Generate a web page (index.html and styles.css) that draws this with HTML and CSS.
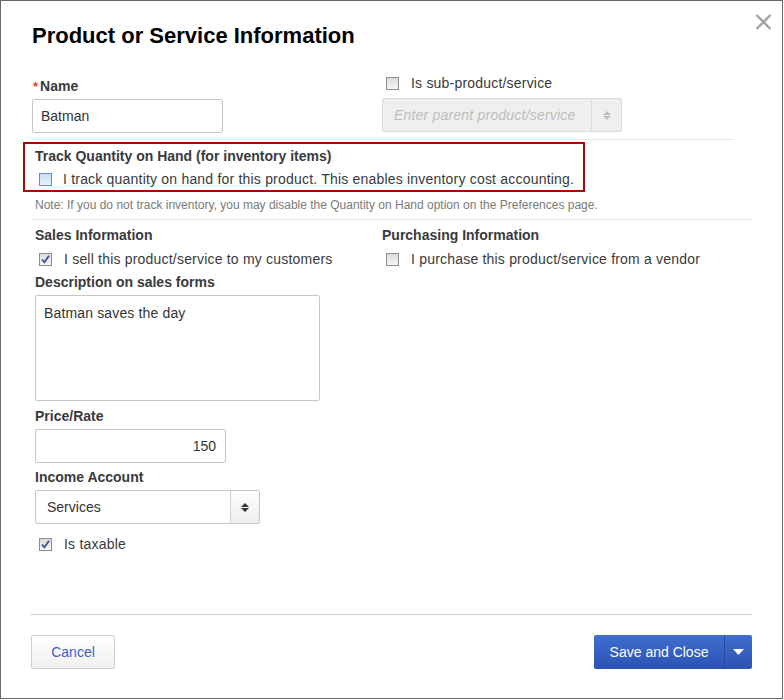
FILE: index.html
```html
<!DOCTYPE html>
<html>
<head>
<meta charset="utf-8">
<link rel="stylesheet" href="styles.css">
</head>
<body>
<div class="dialog">
  <svg class="close" width="17" height="16" viewBox="0 0 17 16"><path d="M1.5 1 L15.5 15 M15.5 1 L1.5 15" stroke="#a3a3a3" stroke-width="2.4" fill="none"/></svg>
  <h1 class="title">Product or Service Information</h1>

  <div class="row1">
    <div class="col">
      <div class="label name-label"><span class="req">*</span>Name</div>
      <div class="input name-input">Batman</div>
    </div>
    <div class="col">
      <div class="check-row"><span class="cb"></span><span class="cb-text">Is sub-product/service</span></div>
      <div class="select disabled parent-select">
        <span class="sel-text placeholder">Enter parent product/service</span>
        <span class="sel-btn"><svg width="8" height="9" viewBox="0 0 8 9"><path d="M0 4L4 0L8 4Z M0 5L4 9L8 5Z" fill="#bdbdbd"/></svg></span>
      </div>
    </div>
  </div>

  <div class="rule rule1"></div>

  <div class="track-box">
    <div class="label">Track Quantity on Hand (for inventory items)</div>
    <div class="check-row"><span class="cb cb-focus"></span><span class="cb-text">I track quantity on hand for this product. This enables inventory cost accounting.</span></div>
  </div>
  <div class="note">Note: If you do not track inventory, you may disable the Quantity on Hand option on the Preferences page.</div>
  <div class="rule rule2"></div>

  <div class="info">
    <div class="col">
      <div class="label">Sales Information</div>
      <div class="check-row mt4"><span class="cb"><svg width="11" height="11" viewBox="0 0 11 11"><path d="M2 5.5 L4.4 8.3 L9 1.8" stroke="#3f4f96" stroke-width="1.8" fill="none"/></svg></span><span class="cb-text">I sell this product/service to my customers</span></div>
      <div class="label mt3">Description on sales forms</div>
      <div class="textarea">Batman saves the day</div>
      <div class="label mt5">Price/Rate</div>
      <div class="input price-input">150</div>
      <div class="label mt4">Income Account</div>
      <div class="select income-select">
        <span class="sel-text">Services</span>
        <span class="sel-btn"><svg width="8" height="9" viewBox="0 0 8 9"><path d="M0 4L4 0L8 4Z M0 5L4 9L8 5Z" fill="#333"/></svg></span>
      </div>
      <div class="check-row taxable"><span class="cb"><svg width="11" height="11" viewBox="0 0 11 11"><path d="M2 5.5 L4.4 8.3 L9 1.8" stroke="#3f4f96" stroke-width="1.8" fill="none"/></svg></span><span class="cb-text">Is taxable</span></div>
    </div>
    <div class="col">
      <div class="label">Purchasing Information</div>
      <div class="check-row mt4"><span class="cb"></span><span class="cb-text">I purchase this product/service from a vendor</span></div>
    </div>
  </div>

  <div class="footer">
    <button class="btn cancel">Cancel</button>
    <div class="split">
      <button class="btn primary">Save and Close</button>
      <button class="btn primary caret"><svg width="11" height="6" viewBox="0 0 11 6"><path d="M0 0H11L5.5 6Z" fill="#fff"/></svg></button>
    </div>
  </div>
</div>
</body>
</html>
```

FILE: styles.css
```css
* { box-sizing: border-box; }
html, body { margin: 0; padding: 0; background: #fff; }
body {
  font-family: "Liberation Sans", Arial, sans-serif;
  font-size: 14px;
  color: #393a3d;
}
.dialog {
  position: relative;
  width: 783px;
  height: 699px;
  border: 1px solid #666;
  padding: 0 31px;
  display: flex;
  flex-direction: column;
  background: #fff;
}
.close {
  position: absolute;
  top: 13px;
  right: 10px;
}
.title {
  margin: 22px 0 0;
  font-size: 22px;
  line-height: 26px;
  font-weight: bold;
  color: #000;
}
.row1 {
  display: grid;
  grid-template-columns: 350px 1fr;
  margin-top: 24px;
}
.col { display: flex; flex-direction: column; align-items: flex-start; }
.label {
  font-weight: bold;
  line-height: 20px;
  height: 20px;
  white-space: nowrap;
}
.name-label { margin-top: 3px; margin-left: 1px; }
.req { color: #e0421b; font-weight: bold; margin-right: 2px; font-size: 13px; }
.mt3 { margin-top: 3px; }
.mt4 { margin-top: 4px; }
.mt5 { margin-top: 5px; }
.input {
  height: 34px;
  border: 1px solid #c6c6c6;
  border-radius: 2px;
  display: flex;
  align-items: center;
  padding: 0 8px;
  color: #333;
  background: #fff;
}
.name-input { width: 191px; margin-top: 3px; }
.price-input { width: 191px; margin-top: 3px; justify-content: flex-end; padding-right: 9px; }
.check-row {
  display: flex;
  align-items: center;
  height: 20px;
  padding-left: 4px;
  white-space: nowrap;
}
.cb-text { letter-spacing: 0.2px; }
.cb {
  width: 13px;
  height: 13px;
  border: 1px solid #8e8e8e;
  background: linear-gradient(#dcdcdc, #f6f6f6);
  margin-right: 12px;
  display: flex;
  align-items: center;
  justify-content: center;
  flex: none;
}
.cb-focus {
  border-color: #5f93c8;
  background: linear-gradient(#c6ddf3, #eaf4fd);
  margin-right: 11px;
}
.select {
  height: 34px;
  border: 1px solid #c6c6c6;
  border-radius: 2px;
  display: flex;
  align-items: stretch;
  background: #fff;
}
.sel-text {
  flex: 1;
  display: flex;
  align-items: center;
  padding-left: 11px;
  color: #333;
  white-space: nowrap;
}
.sel-btn {
  display: flex;
  align-items: center;
  justify-content: center;
  border-left: 1px solid #d0d0d0;
}
.parent-select { width: 240px; margin-top: 5px; }
.parent-select .sel-btn { width: 30px; }
.disabled { background: #efefef; border-color: #dadada; }
.disabled .sel-btn { border-left-color: #dadada; }
.placeholder { color: #bdbdbd; font-style: italic; letter-spacing: 0.2px; }
.income-select { width: 225px; margin-top: 3px; }
.income-select .sel-btn { width: 29px; background: linear-gradient(#fdfdfd, #ededed); }
.rule { height: 1px; background: #e6e6e6; flex: none; }
.rule1 { width: 700px; margin-top: 6px; }
.rule2 { width: 720px; margin-top: 6px; }
.track-box {
  margin: 2px 0 0 -9px;
  width: 562px;
  height: 50px;
  border: 2px solid #b30000;
  padding: 2px 10px 1px;
  display: flex;
  flex-direction: column;
  gap: 3px;
}
.track-box .check-row { padding-left: 4px; }
.note {
  margin: 6px 0 0 3px;
  font-size: 12px;
  line-height: 15px;
  color: #7a7a7a;
  white-space: nowrap;
}
.info {
  display: grid;
  grid-template-columns: 347px 1fr;
  margin: 5px 0 0 3px;
}
.textarea {
  width: 285px;
  height: 106px;
  margin-top: 3px;
  border: 1px solid #c6c6c6;
  border-radius: 2px;
  padding: 7px 8px;
  line-height: 20px;
  color: #333;
  letter-spacing: 0.15px;
}
.taxable { margin-top: 10px; }
.footer {
  margin: auto -1px 0;
  border-top: 1px solid #cccccc;
  padding: 20px 0 29px;
  display: flex;
  justify-content: space-between;
}
.btn {
  font-family: "Liberation Sans", Arial, sans-serif;
  font-size: 14px;
  height: 34px;
  border-radius: 2px;
  padding: 0;
  margin: 0;
  cursor: pointer;
}
.cancel {
  width: 84px;
  border: 1px solid #cfcfcf;
  background: linear-gradient(#ffffff, #f0f0f0);
  color: #3b63c4;
}
.split { display: flex; }
.primary {
  border: none;
  background: linear-gradient(#3f6fcf, #2c52b4);
  color: #fff;
}
.split .primary:first-child { width: 130px; border-radius: 2px 0 0 2px; }
.caret {
  width: 28px;
  border-left: 1px solid #27489f;
  border-radius: 0 2px 2px 0;
  display: flex;
  align-items: center;
  justify-content: center;
}
```
